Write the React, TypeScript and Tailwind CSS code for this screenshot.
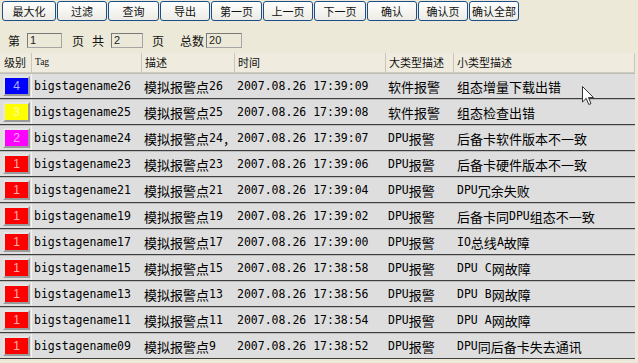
import React from "react";

const CJK = /([\u3000-\u303f\u4e00-\u9fff\uff00-\uffef]+)/;

function Mixed({ text }: { text: string }) {
  const parts = text.split(CJK).filter((p) => p.length > 0);
  return (
    <>
      {parts.map((p, i) =>
        CJK.test(p) ? (
          <span key={i} className="text-[13px] [font-family:'Noto_Sans_CJK_SC',sans-serif]">
            {p}
          </span>
        ) : (
          <span key={i} className="text-[11.5px] whitespace-pre [font-family:'DejaVu_Sans_Mono',monospace]">
            {p}
          </span>
        )
      )}
    </>
  );
}

type Row = {
  level: number;
  color: string;
  tag: string;
  desc: string;
  time: string;
  big: string;
  small: string;
};

const rows: Row[] = [
  { level: 4, color: "bg-[#0000ff]", tag: "bigstagename26", desc: "模拟报警点26", time: "2007.08.26 17:39:09", big: "软件报警", small: "组态增量下载出错" },
  { level: 3, color: "bg-[#ffff00]", tag: "bigstagename25", desc: "模拟报警点25", time: "2007.08.26 17:39:08", big: "软件报警", small: "组态检查出错" },
  { level: 2, color: "bg-[#ff00ff]", tag: "bigstagename24", desc: "模拟报警点24，", time: "2007.08.26 17:39:07", big: "DPU报警", small: "后备卡软件版本不一致" },
  { level: 1, color: "bg-[#ff0000]", tag: "bigstagename23", desc: "模拟报警点23", time: "2007.08.26 17:39:06", big: "DPU报警", small: "后备卡硬件版本不一致" },
  { level: 1, color: "bg-[#ff0000]", tag: "bigstagename21", desc: "模拟报警点21", time: "2007.08.26 17:39:04", big: "DPU报警", small: "DPU冗余失败" },
  { level: 1, color: "bg-[#ff0000]", tag: "bigstagename19", desc: "模拟报警点19", time: "2007.08.26 17:39:02", big: "DPU报警", small: "后备卡同DPU组态不一致" },
  { level: 1, color: "bg-[#ff0000]", tag: "bigstagename17", desc: "模拟报警点17", time: "2007.08.26 17:39:00", big: "DPU报警", small: "IO总线A故障" },
  { level: 1, color: "bg-[#ff0000]", tag: "bigstagename15", desc: "模拟报警点15", time: "2007.08.26 17:38:58", big: "DPU报警", small: "DPU C网故障" },
  { level: 1, color: "bg-[#ff0000]", tag: "bigstagename13", desc: "模拟报警点13", time: "2007.08.26 17:38:56", big: "DPU报警", small: "DPU B网故障" },
  { level: 1, color: "bg-[#ff0000]", tag: "bigstagename11", desc: "模拟报警点11", time: "2007.08.26 17:38:54", big: "DPU报警", small: "DPU A网故障" },
  { level: 1, color: "bg-[#ff0000]", tag: "bigstagename09", desc: "模拟报警点9", time: "2007.08.26 17:38:52", big: "DPU报警", small: "DPU同后备卡失去通讯" },
];

const buttons: [string, string][] = [
  ["最大化", "w-[54px]"],
  ["过滤", "w-[50px]"],
  ["查询", "w-[51px]"],
  ["导出", "w-[50px]"],
  ["第一页", "w-[51px]"],
  ["上一页", "w-[50px]"],
  ["下一页", "w-[52px]"],
  ["确认", "w-[50px]"],
  ["确认页", "w-[50px]"],
  ["确认全部", "w-[50px]"],
];

function Input({ value, w }: { value: string; w: string }) {
  return (
    <div
      className={`${w} h-[15px] border border-[#a5a5a5] border-t-[#7a7a7a] border-l-[#7a7a7a] bg-[#ece9d8] flex items-center pl-[2px] text-[11px] text-[#222] [font-family:'Liberation_Sans',sans-serif]`}
    >
      {value}
    </div>
  );
}

const cell = "flex items-center whitespace-nowrap overflow-hidden pt-[1px]";

export default function App() {
  return (
    <div className="relative w-[638px] h-[363px] overflow-hidden bg-[#ece9d8] text-[#111] [font-family:'Noto_Sans_CJK_SC',sans-serif]">
      {/* toolbar */}
      <div className="flex gap-[1px] pl-[2px] pt-[1px] h-[21px]">
        {buttons.map(([label, w]) => (
          <div
            key={label}
            className={`${w} h-[20px] rounded-[3px] border border-[#1c4f8a] bg-gradient-to-b from-[#ffffff] to-[#ecebe4] flex items-center justify-center text-[11px] leading-none text-[#111]`}
          >
            {label}
          </div>
        ))}
      </div>

      {/* page row */}
      <div className="flex items-center h-[15px] mt-[12px] pl-[8px] text-[12px] leading-none">
        <span>第</span>
        <div className="ml-[7px]">
          <Input value="1" w="w-[35px]" />
        </div>
        <span className="ml-[10px]">页</span>
        <span className="ml-[8px]">共</span>
        <div className="ml-[7px]">
          <Input value="2" w="w-[32px]" />
        </div>
        <span className="ml-[9px]">页</span>
        <span className="ml-[16px]">总数</span>
        <div className="ml-[2px]">
          <Input value="20" w="w-[36px]" />
        </div>
      </div>

      {/* header */}
      <div className="flex h-[20px] mt-[5px] w-[635px] bg-[#efecdf] border-b border-[#d0ccbb] text-[11px] leading-none">
        <div className="w-[32px] border-r border-[#c9c6b6] flex items-center pl-[4px]">级别</div>
        <div className="w-[110px] border-r border-[#c9c6b6] flex items-center pl-[3px] text-[9.5px] [font-family:'Liberation_Serif',serif]">
          Tag
        </div>
        <div className="w-[93px] border-r border-[#c9c6b6] flex items-center pl-[3px]">描述</div>
        <div className="w-[151px] border-r border-[#c9c6b6] flex items-center pl-[3px]">时间</div>
        <div className="w-[68px] border-r border-[#c9c6b6] flex items-center pl-[3px]">大类型描述</div>
        <div className="w-[181px] border-r border-[#c9c6b6] flex items-center pl-[3px]">小类型描述</div>
      </div>

      {/* rows */}
      <div className="flex flex-col w-[635px]">
        {rows.map((r, i) => (
          <div
            key={i}
            className="flex h-[26px] bg-[#dedede] border-t border-t-[#bdbdbd] border-b border-b-[#3e3e3e] leading-none text-black"
          >
            <div className="w-[32px] border-r border-[#f4f4f4] flex items-center pl-[3px]">
              <div
                className={`${r.color} w-[27px] h-[20px] border-2 border-t-[#e4e4e4] border-l-[#e4e4e4] border-r-[#9a9a9a] border-b-[#9a9a9a] flex items-center justify-center text-[12px] text-white/70 [font-family:'Liberation_Sans',sans-serif]`}
              >
                {r.level}
              </div>
            </div>
            <div className={`w-[110px] pl-[2px] ${cell}`}>
              <Mixed text={r.tag} />
            </div>
            <div className={`w-[93px] pl-[2px] ${cell}`}>
              <Mixed text={r.desc} />
            </div>
            <div className={`w-[151px] pl-[2px] ${cell}`}>
              <Mixed text={r.time} />
            </div>
            <div className={`w-[68px] pl-[2px] ${cell}`}>
              <Mixed text={r.big} />
            </div>
            <div className={`w-[181px] pl-[3px] ${cell}`}>
              <Mixed text={r.small} />
            </div>
          </div>
        ))}
      </div>

      {/* mouse cursor */}
      <svg
        className="absolute left-[582px] top-[86px]"
        width="13"
        height="20"
        viewBox="0 0 13 20"
      >
        <path
          d="M0.5 0.5 L0.5 16 L4.2 12.4 L6.8 18.5 L9 17.6 L6.5 11.6 L11.5 11.6 Z"
          fill="#ffffff"
          stroke="#333333"
          strokeWidth="1"
          strokeLinejoin="miter"
        />
      </svg>
    </div>
  );
}
